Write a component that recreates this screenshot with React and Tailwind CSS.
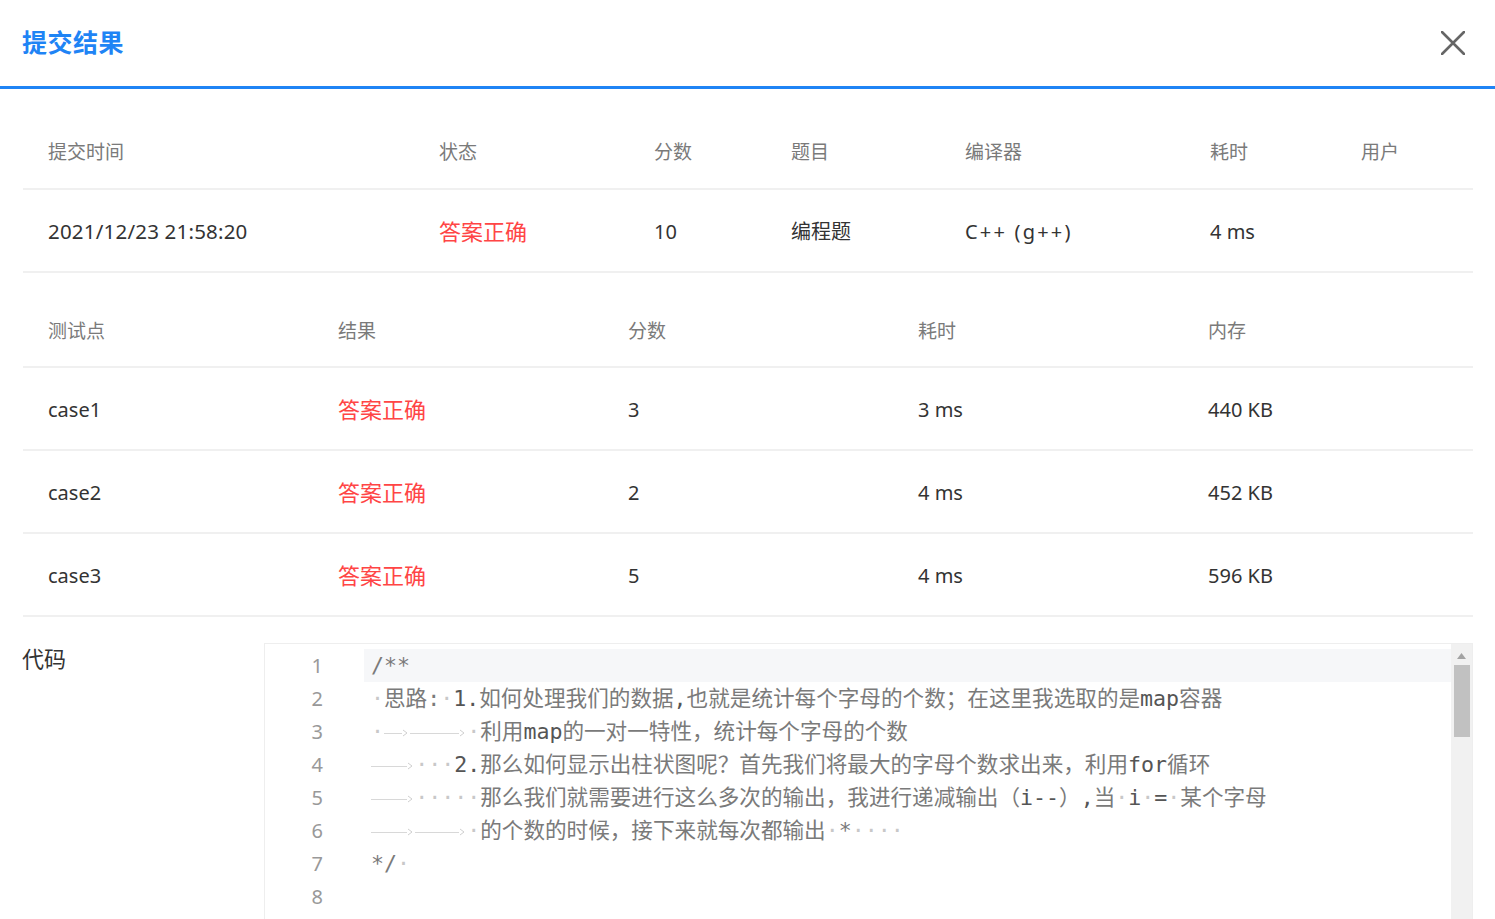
import React from 'react';

const FONT = { fontFamily: '"Noto Sans", "Noto Sans CJK SC", sans-serif' };
const MONO = { fontFamily: '"DejaVu Sans Mono", "Noto Sans CJK SC", monospace' };

const summaryCols = ['提交时间', '状态', '分数', '题目', '编译器', '耗时', '用户'];
const summaryRow = ['2021/12/23 21:58:20', '答案正确', '10', '编程题', 'C++ (g++)', '4 ms', ''];

const caseCols = ['测试点', '结果', '分数', '耗时', '内存'];
const cases = [
    ['case1', '答案正确', '3', '3 ms', '440 KB'],
    ['case2', '答案正确', '2', '4 ms', '452 KB'],
    ['case3', '答案正确', '5', '4 ms', '596 KB'],
];

// d = space dot, t = tab arrow (width in ch), b = darker ascii
const codeLines = [
    [['x', '/**']],
    [['d'], ['x', '思路:'], ['d'], ['b', '1.'], ['x', '如何处理我们的数据'], ['b', ','], ['x', '也就是统计每个字母的个数；在这里我选取的是'], ['b', 'map'], ['x', '容器']],
    [['d'], ['t', 2], ['t', 4.4], ['d'], ['x', '利用'], ['b', 'map'], ['x', '的一对一特性，统计每个字母的个数']],
    [['t', 3.4], ['d'], ['d'], ['d'], ['b', '2.'], ['x', '那么如何显示出柱状图呢？首先我们将最大的字母个数求出来，利用'], ['b', 'for'], ['x', '循环']],
    [['t', 3.4], ['d'], ['d'], ['d'], ['d'], ['d'], ['x', '那么我们就需要进行这么多次的输出，我进行递减输出（'], ['b', 'i--'], ['x', '）'], ['b', ','], ['x', '当'], ['d'], ['b', 'i'], ['d'], ['b', '='], ['d'], ['x', '某个字母']],
    [['t', 3.4], ['t', 4], ['d'], ['x', '的个数的时候，接下来就每次都输出'], ['d'], ['x', '*'], ['d'], ['d'], ['d'], ['d']],
    [['x', '*/'], ['d']],
    [],
];

const Dot = () => (
    <span className="inline-block w-[1ch] text-center text-[#c8c8c8]">·</span>
);

const Tab = ({ w }) => (
    <span className="inline-flex items-center align-middle" style={{ width: `${w}ch` }}>
        <span className="flex-1 h-px bg-[#d8d8d8]" />
        <svg width="6" height="8" viewBox="0 0 6 8" className="mr-[2px] shrink-0">
            <path d="M1 1 L5 4 L1 7" fill="none" stroke="#d0d0d0" strokeWidth="1" />
        </svg>
    </span>
);

const App = () => {
    return (
        <div className="w-[1495px] h-screen overflow-hidden bg-white text-[#333]" style={FONT}>
            {/* header */}
            <div className="flex items-center justify-between h-[89px] pl-[22px] pr-[30px] border-b-[3px] border-[#1f84f5]">
                <h1 className="text-[25px] font-bold text-[#1f84f5] tracking-[0.5px]">提交结果</h1>
                <svg width="24" height="24" viewBox="0 0 24 24">
                    <path d="M1 1 L23 23 M23 1 L1 23" stroke="#666" strokeWidth="2.6" strokeLinecap="round" />
                </svg>
            </div>

            <div className="pl-[23px] pr-[22px]">
                {/* summary table */}
                <div className="mt-[23px]">
                    <div className="grid grid-cols-[391px_215px_137px_174px_245px_151px_1fr] h-[78px] pt-[5px] items-center border-b-2 border-[#f0f0f0] text-[19px] text-[#7a7a7a]">
                        {summaryCols.map((c) => (
                            <div key={c} className="pl-[25px]">{c}</div>
                        ))}
                    </div>
                    <div className="grid grid-cols-[391px_215px_137px_174px_245px_151px_1fr] h-[83px] pt-[2px] items-center border-b-2 border-[#f0f0f0] text-[20px] text-[#333]">
                        {summaryRow.map((c, i) => (
                            <div key={i} className={`pl-[25px] ${i === 0 ? 'text-[20.5px] tracking-[0.2px]' : ''} ${i === 1 ? 'text-[22px] text-[#ff4545]' : ''} ${i === 4 ? 'tracking-[2.2px]' : ''}`}>{c}</div>
                        ))}
                    </div>
                </div>

                {/* case table */}
                <div className="mt-[18px]">
                    <div className="grid grid-cols-5 h-[77px] pt-[5px] items-center border-b-2 border-[#f0f0f0] text-[19px] text-[#7a7a7a]">
                        {caseCols.map((c) => (
                            <div key={c} className="pl-[25px]">{c}</div>
                        ))}
                    </div>
                    {cases.map((row) => (
                        <div key={row[0]} className="grid grid-cols-5 h-[83px] pt-[2px] items-center border-b-2 border-[#f0f0f0] text-[20px] text-[#333]">
                            {row.map((c, i) => (
                                <div key={i} className={`pl-[25px] ${i === 1 ? 'text-[22px] text-[#ff4545]' : ''}`}>{c}</div>
                            ))}
                        </div>
                    ))}
                </div>

                {/* code */}
                <div className="flex mt-[26px]">
                    <div className="w-[242px] shrink-0 -ml-px text-[22px] leading-[30px] text-[#333]">代码</div>
                    <div className="flex-1 h-[400px] border border-[#eeeeee] flex">
                        <div className="w-[99px] shrink-0 pt-[5px] pr-[41px] text-right text-[20px] text-[#999]">
                            {codeLines.map((_, i) => (
                                <div key={i} className="h-[33px] leading-[33px]">{i + 1}</div>
                            ))}
                        </div>
                        <div className="flex-1 pt-[5px] overflow-hidden">
                            {codeLines.map((line, i) => (
                                <div
                                    key={i}
                                    className={`h-[33px] leading-[33px] pl-[7px] whitespace-pre text-[21.6px] text-[#7a7a7a] ${i === 0 ? 'bg-[#f6f7f9]' : ''}`}
                                    style={MONO}
                                >
                                    {line.map((tok, j) => {
                                        if (tok[0] === 'd') return <Dot key={j} />;
                                        if (tok[0] === 't') return <Tab key={j} w={tok[1]} />;
                                        if (tok[0] === 'b') return <span key={j} className="text-[#555]">{tok[1]}</span>;
                                        return <span key={j}>{tok[1]}</span>;
                                    })}
                                </div>
                            ))}
                        </div>
                        {/* scrollbar */}
                        <div className="w-[21px] shrink-0 bg-[#f1f1f1] flex flex-col items-center">
                            <svg width="9" height="6" viewBox="0 0 9 6" className="mt-[9px]">
                                <path d="M0 6 L4.5 0 L9 6 Z" fill="#a3a3a3" />
                            </svg>
                            <div className="mt-[6px] w-[16px] h-[72px] bg-[#c1c1c1]" />
                        </div>
                    </div>
                </div>
            </div>
        </div>
    );
};

export default App;
